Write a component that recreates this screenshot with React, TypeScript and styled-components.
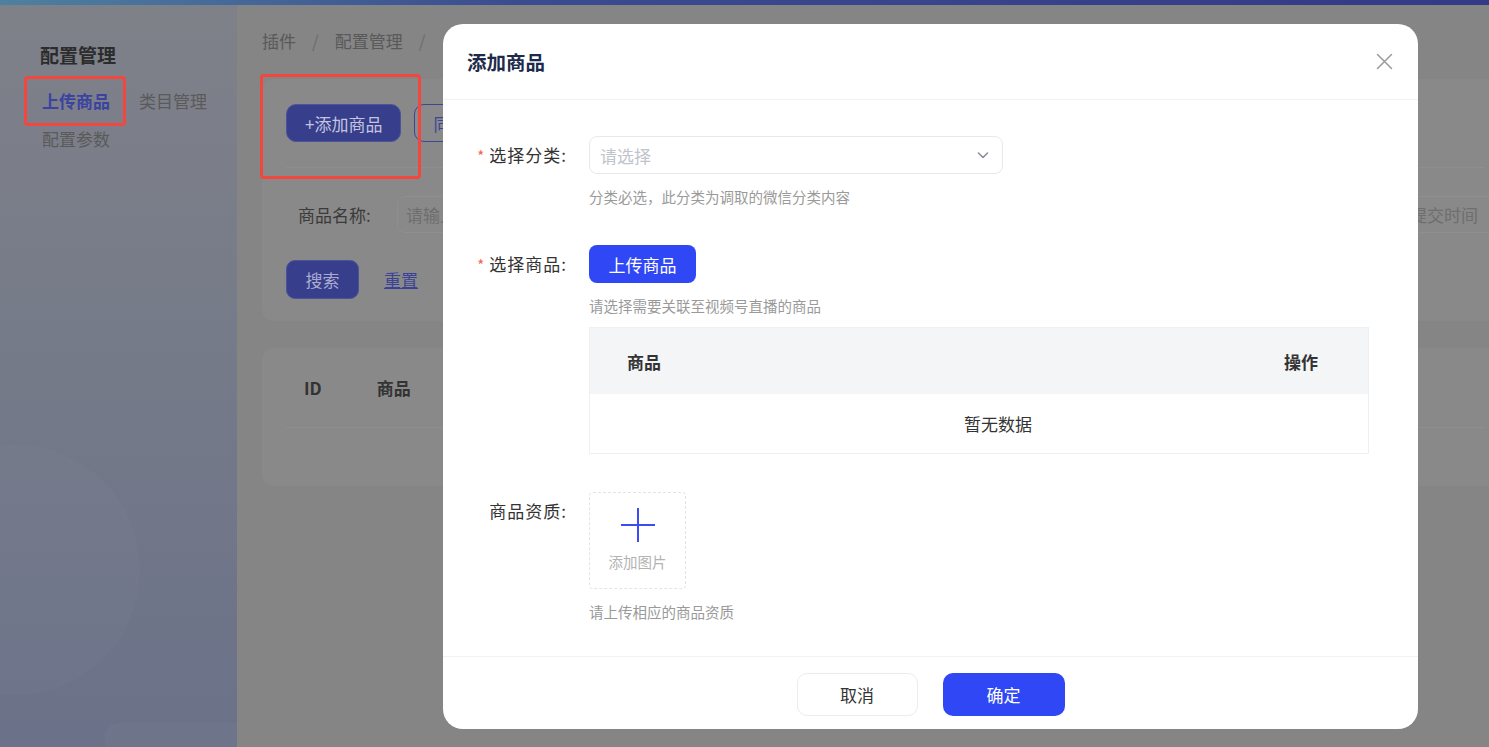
import React from 'react';
import styled, { createGlobalStyle } from 'styled-components';

const GlobalStyle = createGlobalStyle`
  html, body {
    margin: 0;
    padding: 0;
  }
  body {
    font-family: "Noto Sans CJK SC", "Noto Sans", sans-serif;
    color: #333;
  }
  * {
    box-sizing: border-box;
  }
`;

/* ---------- dimmed page behind the dialog ---------- */

const Page = styled.div`
  position: relative;
  width: 100vw;
  height: 100vh;
  overflow: hidden;
  display: flex;
  flex-direction: column;
  background: #858585;
`;

const TopStrip = styled.div`
  height: 5px;
  flex-shrink: 0;
  background: linear-gradient(90deg, #4e80a0 0%, #3b4b8f 35%, #343a86 100%);
`;

const Body = styled.div`
  flex: 1;
  display: flex;
  min-height: 0;
`;

const Sidebar = styled.aside`
  position: relative;
  width: 237px;
  flex-shrink: 0;
  padding: 37px 0 0 40px;
  overflow: hidden;
  background: linear-gradient(180deg, #7f8189 0%, #767b89 45%, #6b7188 100%);

  &::before {
    content: '';
    position: absolute;
    left: -110px;
    top: 440px;
    width: 250px;
    height: 250px;
    border-radius: 50%;
    background: rgba(255, 255, 255, 0.018);
  }

  &::after {
    content: '';
    position: absolute;
    left: 105px;
    top: 718px;
    width: 200px;
    height: 80px;
    border-radius: 14px;
    background: rgba(255, 255, 255, 0.025);
  }
`;

const SideTitle = styled.div`
  font-size: 19px;
  font-weight: 700;
  line-height: 26px;
  color: #2c2c2c;
`;

const SideMenu = styled.div`
  display: flex;
  flex-wrap: wrap;
  column-gap: 29px;
  row-gap: 14px;
  margin-top: 21px;
  padding-left: 2px;
  width: 190px;
`;

const SideItem = styled.span<{ $active?: boolean }>`
  font-size: 17px;
  line-height: 24px;
  font-weight: ${(p) => (p.$active ? 700 : 400)};
  color: ${(p) => (p.$active ? '#3b43a0' : '#5a5a5a')};
`;

const Main = styled.main`
  flex: 1;
  min-width: 0;
  padding-left: 25px;
  overflow: hidden;
`;

const Breadcrumb = styled.div`
  display: flex;
  gap: 16px;
  margin-top: 24px;
  font-size: 17px;
  line-height: 24px;
  color: #595959;
`;

const Sep = styled.span`
  color: #6c6c6c;
`;

const Card = styled.section`
  margin-right: -20px;
  background: #898989;
  border-radius: 12px;
`;

const FilterCard = styled(Card)`
  margin-top: 26px;
  padding: 25px 24px 22px;
`;

const Toolbar = styled.div`
  display: flex;
  gap: 13px;
  padding-bottom: 25px;
  border-bottom: 1px solid #8e8e8e;
`;

const DimButton = styled.button<{ $outline?: boolean }>`
  height: 38px;
  padding: 0 18px;
  border-radius: 10px;
  font-family: inherit;
  font-size: 17px;
  flex-shrink: 0;
  border: 1px solid ${(p) => (p.$outline ? '#3d4597' : '#4c5398')};
  background: ${(p) => (p.$outline ? '#8a8a8a' : '#373e8c')};
  color: ${(p) => (p.$outline ? '#3d4597' : '#c3c5df')};
`;

const SearchRow = styled.div`
  display: flex;
  align-items: center;
  margin-top: 28px;
  padding-left: 12px;
`;

const DimLabel = styled.span`
  flex-shrink: 0;
  width: 99px;
  font-size: 17px;
  color: #3a3a3a;
`;

const DimInput = styled.div<{ $width: number }>`
  flex-shrink: 0;
  width: ${(p) => p.$width}px;
  height: 37px;
  padding: 0 8px;
  border: 1px solid #8f8f8f;
  border-radius: 8px;
  font-size: 17px;
  line-height: 35px;
  color: #6e6e6e;
  white-space: nowrap;
  overflow: hidden;
`;

const DateInput = styled(DimInput)`
  margin-left: 727px;
  border-left: none;
  border-right: none;
  border-radius: 0;
  padding-left: 12px;
`;

const ActionRow = styled.div`
  display: flex;
  align-items: center;
  gap: 25px;
  margin-top: 27px;
`;

const SearchBtn = styled(DimButton)`
  height: 39px;
  width: 73px;
  padding: 0;
  border-radius: 9px;
  color: #a9acd0;
`;

const LinkText = styled.span`
  font-size: 17px;
  color: #3b4399;
  text-decoration: underline;
`;

const ListCard = styled(Card)`
  margin-top: 27px;
  height: 138px;
  padding: 0 24px;
`;

const ListHead = styled.div`
  display: flex;
  align-items: center;
  height: 80px;
  padding-left: 18px;
  gap: 55px;
  border-bottom: 1px solid #8e8e8e;
  font-size: 17px;
  font-weight: 700;
  color: #333;
`;

const Annotation = styled.div<{ $x: number; $y: number; $w: number; $h: number }>`
  position: absolute;
  left: ${(p) => p.$x}px;
  top: ${(p) => p.$y}px;
  width: ${(p) => p.$w}px;
  height: ${(p) => p.$h}px;
  border: 3px solid #f2463f;
  border-radius: 4px;
`;

/* ---------- dialog ---------- */

const Dialog = styled.div`
  position: absolute;
  left: 443px;
  top: 24px;
  width: 975px;
  height: 705px;
  display: flex;
  flex-direction: column;
  background: #fff;
  border-radius: 20px;
  overflow: hidden;
`;

const DialogHeader = styled.header`
  height: 76px;
  flex-shrink: 0;
  display: flex;
  align-items: center;
  justify-content: space-between;
  padding: 0 25px 0 24px;
  border-bottom: 1px solid #f2f2f2;
`;

const DialogTitle = styled.h2`
  margin: 0;
  font-size: 19.5px;
  font-weight: 700;
  color: #1e2a4a;
`;

const CloseBtn = styled.button`
  width: 18px;
  height: 18px;
  padding: 0;
  border: none;
  background: none;
  display: flex;
  align-items: center;
  justify-content: center;
`;

const DialogBody = styled.div`
  flex: 1;
  padding: 36px 49px 0 24px;
`;

const FormItem = styled.div`
  display: flex;
  margin-bottom: 38px;

  &:last-child {
    margin-bottom: 0;
  }
`;

const FormLabel = styled.label`
  width: 100px;
  flex-shrink: 0;
  margin-right: 22px;
  height: 38px;
  line-height: 38px;
  text-align: right;
  font-size: 17px;
  letter-spacing: 1px;
  color: #333;
  white-space: nowrap;
`;

const Required = styled.span`
  color: #f2664c;
  font-size: 15px;
  margin-right: 4px;
`;

const Control = styled.div`
  flex: 1;
  min-width: 0;
`;

const Select = styled.div`
  width: 414px;
  height: 38px;
  display: flex;
  align-items: center;
  justify-content: space-between;
  padding: 0 12px 0 10px;
  border: 1px solid #e6e8ee;
  border-radius: 8px;
  font-size: 17px;
  color: #c0c4cc;
`;

const Hint = styled.div`
  margin-top: 12px;
  font-size: 14.5px;
  line-height: 21px;
  color: #9a9a9a;
`;

const PrimaryButton = styled.button<{ $w: number; $h: number }>`
  width: ${(p) => p.$w}px;
  height: ${(p) => p.$h}px;
  border: none;
  border-radius: ${(p) => (p.$h > 40 ? 10 : 8)}px;
  background: #2f47f4;
  color: #fff;
  font-family: inherit;
  font-size: 17px;
`;

const GhostButton = styled.button`
  width: 121px;
  height: 43px;
  border: 1px solid #ececec;
  border-radius: 10px;
  background: #fff;
  color: #333;
  font-family: inherit;
  font-size: 17px;
`;

const Table = styled.div`
  margin-top: 11px;
  width: 780px;
  border: 1px solid #eef0f3;
`;

const TableHead = styled.div`
  height: 66px;
  display: flex;
  align-items: center;
  justify-content: space-between;
  padding: 0 50px 0 37px;
  background: #f4f5f7;
  font-size: 17px;
  font-weight: 700;
  color: #333;
`;

const TableEmpty = styled.div`
  height: 59px;
  display: flex;
  align-items: center;
  justify-content: center;
  padding-left: 38px;
  font-size: 17px;
  color: #333;
`;

const UploadBox = styled.div`
  width: 97px;
  height: 97px;
  display: flex;
  flex-direction: column;
  align-items: center;
  padding-top: 15px;
  border: 1px dashed #e4e4e4;
  border-radius: 4px;
`;

const UploadText = styled.span`
  margin-top: 10px;
  font-size: 14.5px;
  line-height: 20px;
  color: #b3b3b3;
`;

const DialogFooter = styled.footer`
  height: 73px;
  flex-shrink: 0;
  display: flex;
  align-items: center;
  justify-content: center;
  gap: 25px;
  border-top: 1px solid #f2f2f2;
  padding-top: 2px;
`;

const Chevron = () => (
  <svg width="14" height="14" viewBox="0 0 14 14" fill="none">
    <path d="M2.5 5l4.5 4.5L11.5 5" stroke="#8a8f99" strokeWidth="1.6" strokeLinecap="round" strokeLinejoin="round" />
  </svg>
);

const CloseIcon = () => (
  <svg width="17" height="17" viewBox="0 0 17 17" fill="none">
    <path d="M1.5 1.5l14 14M15.5 1.5l-14 14" stroke="#9a9a9a" strokeWidth="1.5" strokeLinecap="round" />
  </svg>
);

const PlusIcon = () => (
  <svg width="34" height="34" viewBox="0 0 34 34" fill="none">
    <path d="M17 0v34M0 17h34" stroke="#3a4cf2" strokeWidth="2" />
  </svg>
);

export default function App() {
  return (
    <>
      <GlobalStyle />
      <Page>
        <TopStrip />
        <Body>
          <Sidebar>
            <SideTitle>配置管理</SideTitle>
            <SideMenu>
              <SideItem $active>上传商品</SideItem>
              <SideItem>类目管理</SideItem>
              <SideItem>配置参数</SideItem>
            </SideMenu>
          </Sidebar>
          <Main>
            <Breadcrumb>
              <span>插件</span>
              <Sep>/</Sep>
              <span>配置管理</span>
              <Sep>/</Sep>
            </Breadcrumb>
            <FilterCard>
              <Toolbar>
                <DimButton>+添加商品</DimButton>
                <DimButton $outline>同步商品</DimButton>
              </Toolbar>
              <SearchRow>
                <DimLabel>商品名称:</DimLabel>
                <DimInput $width={240}>请输入商品名称</DimInput>
                <DateInput $width={300}>开始提交时间</DateInput>
              </SearchRow>
              <ActionRow>
                <SearchBtn>搜索</SearchBtn>
                <LinkText>重置</LinkText>
              </ActionRow>
            </FilterCard>
            <ListCard>
              <ListHead>
                <span>ID</span>
                <span>商品</span>
              </ListHead>
            </ListCard>
          </Main>
        </Body>

        <Annotation $x={24} $y={76} $w={102} $h={50} />
        <Annotation $x={260} $y={74} $w={161} $h={105} />

        <Dialog role="dialog">
          <DialogHeader>
            <DialogTitle>添加商品</DialogTitle>
            <CloseBtn aria-label="关闭">
              <CloseIcon />
            </CloseBtn>
          </DialogHeader>
          <DialogBody>
            <FormItem>
              <FormLabel>
                <Required>*</Required>选择分类:
              </FormLabel>
              <Control>
                <Select>
                  <span>请选择</span>
                  <Chevron />
                </Select>
                <Hint>分类必选，此分类为调取的微信分类内容</Hint>
              </Control>
            </FormItem>
            <FormItem>
              <FormLabel>
                <Required>*</Required>选择商品:
              </FormLabel>
              <Control>
                <PrimaryButton $w={107} $h={38}>上传商品</PrimaryButton>
                <Hint>请选择需要关联至视频号直播的商品</Hint>
                <Table>
                  <TableHead>
                    <span>商品</span>
                    <span>操作</span>
                  </TableHead>
                  <TableEmpty>暂无数据</TableEmpty>
                </Table>
              </Control>
            </FormItem>
            <FormItem>
              <FormLabel>商品资质:</FormLabel>
              <Control>
                <UploadBox>
                  <PlusIcon />
                  <UploadText>添加图片</UploadText>
                </UploadBox>
                <Hint>请上传相应的商品资质</Hint>
              </Control>
            </FormItem>
          </DialogBody>
          <DialogFooter>
            <GhostButton>取消</GhostButton>
            <PrimaryButton $w={122} $h={43}>确定</PrimaryButton>
          </DialogFooter>
        </Dialog>
      </Page>
    </>
  );
}
